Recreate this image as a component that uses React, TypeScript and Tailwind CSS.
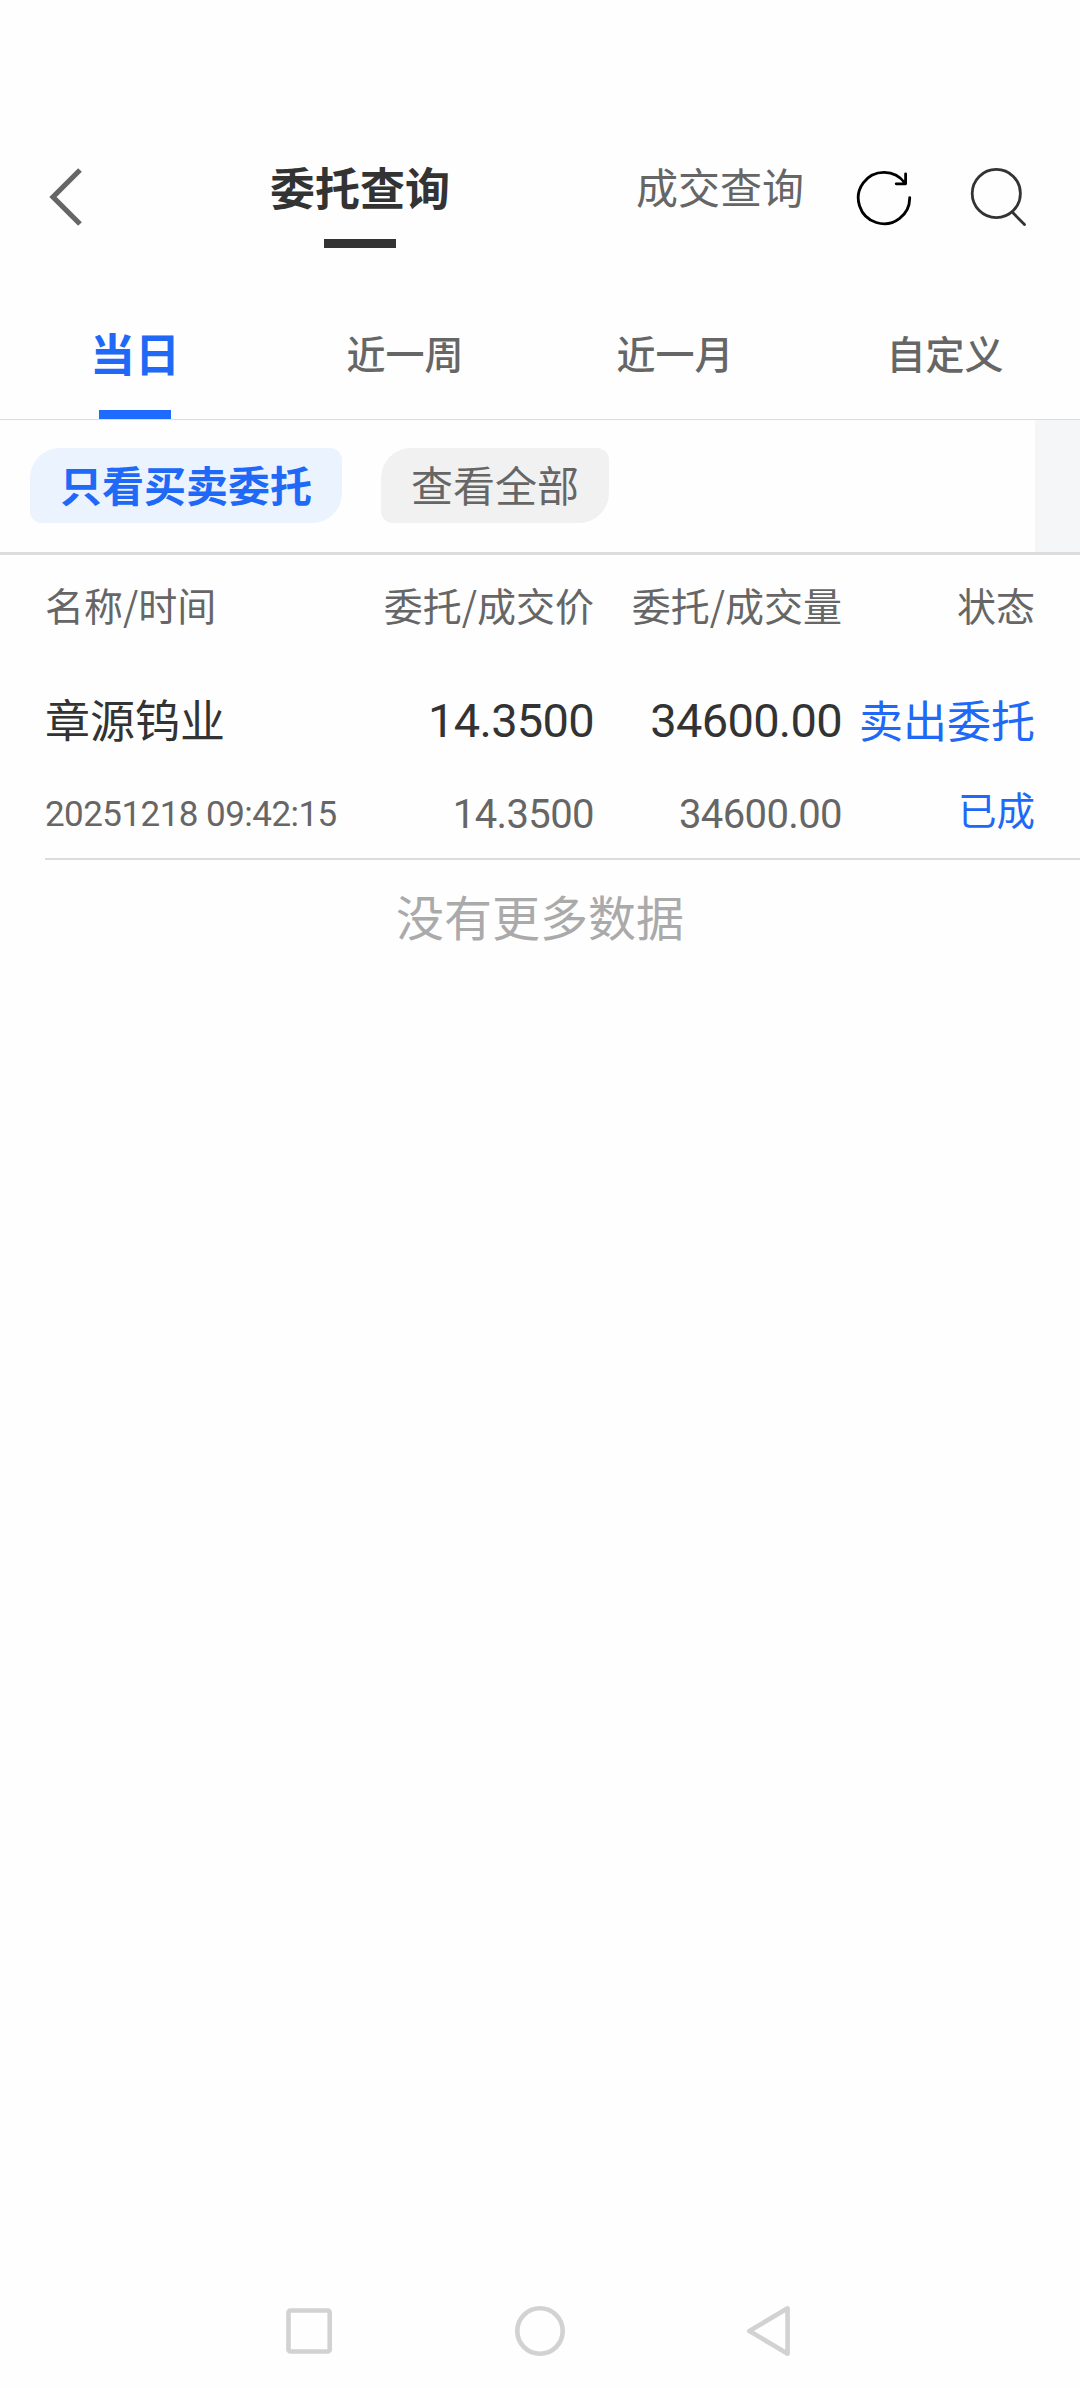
import React, { useState } from "react";
import clsx from "clsx";

type Order = {
  name: string;
  time: string;
  orderPrice: string;
  dealPrice: string;
  orderAmount: string;
  dealAmount: string;
  type: string;
  status: string;
};

const RANGES = ["当日", "近一周", "近一月", "自定义"];
const FILTERS = ["只看买卖委托", "查看全部"];

const ORDERS: Order[] = [
  {
    name: "章源钨业",
    time: "20251218 09:42:15",
    orderPrice: "14.3500",
    dealPrice: "14.3500",
    orderAmount: "34600.00",
    dealAmount: "34600.00",
    type: "卖出委托",
    status: "已成",
  },
];

const BackIcon = () => (
  <svg width="36" height="60" viewBox="0 0 36 60" fill="none">
    <path d="M33 3L6 30l27 27" stroke="#666" strokeWidth="5.2" />
  </svg>
);

const RefreshIcon = () => (
  <svg width="58" height="58" viewBox="0 0 58 58" fill="none">
    <path
      d="M54.7 28.6A25.7 25.7 0 1 1 50 14.2M50.6 4.8v10h-9.4"
      stroke="#000"
      strokeWidth="2.8"
      strokeLinecap="round"
      strokeLinejoin="round"
    />
  </svg>
);

const SearchIcon = () => (
  <svg width="60" height="60" viewBox="0 0 60 60" fill="none">
    <g stroke="#333" strokeWidth="2.8" strokeLinecap="round">
      <circle cx="27.3" cy="26.5" r="24.1" />
      <path d="M43.5 45.3l12 12.3" />
    </g>
  </svg>
);

const Header: React.FC = () => (
  <header className="flex h-[180px] mt-[105px] pt-[55px]">
    <button className="block w-[180px] h-[70px] pl-[47px] pt-1">
      <BackIcon />
    </button>
    <div className="flex flex-col items-center w-[360px]">
      <h1 className="h-[54px] leading-[54px] text-[45px] font-bold text-[#333]">
        委托查询
      </h1>
      <div className="w-[72px] h-[9px] mt-[25px] bg-[#333]" />
    </div>
    <div className="w-[360px] h-[52px] leading-[52px] text-center text-[42px] text-[#666] -mr-[45px]">
      成交查询
    </div>
    <button className="block h-[58px] mt-[9px]">
      <RefreshIcon />
    </button>
    <button className="block h-[60px] mt-[7px] ml-[56px]">
      <SearchIcon />
    </button>
  </header>
);

const OrderRow: React.FC<{ order: Order }> = ({ order }) => (
  <div className="ml-[45px] pr-[45px] h-[212px] pt-[37px] border-b-2 border-[#dcdcdc]">
    <div className="grid grid-cols-[290px_259px_248px_193px] h-[66px] leading-[68px] text-[45px] text-[#333]">
      <span>{order.name}</span>
      <span className="text-right font-[Roboto] text-[47px] tracking-[-0.7px] leading-[71px]">{order.orderPrice}</span>
      <span className="text-right font-[Roboto] text-[47px] tracking-[-0.7px] leading-[71px]">{order.orderAmount}</span>
      <span className="text-right text-[44px] text-[#2069f6]">{order.type}</span>
    </div>
    <div className="grid grid-cols-[290px_259px_248px_193px] h-[60px] mt-[28px] leading-[72px] text-[40px] text-[#666]">
      <span className="font-[Roboto] text-[35px] tracking-[-0.55px] whitespace-nowrap">{order.time}</span>
      <span className="text-right font-[Roboto] tracking-[-0.6px]">{order.dealPrice}</span>
      <span className="text-right font-[Roboto] tracking-[-0.6px]">{order.dealAmount}</span>
      <span className="text-right text-[38.5px] leading-[58px] text-[#2069f6]">{order.status}</span>
    </div>
  </div>
);

const NavBar: React.FC = () => (
  <nav className="flex items-center h-[114px] pl-[284px]">
    <svg width="508" height="54" viewBox="0 0 508 54" fill="none">
      <g stroke="#d2d2d2" strokeWidth="4.6" strokeLinejoin="round">
        <rect x="4.5" y="6.5" width="41.2" height="41" rx="2" />
        <circle cx="256" cy="27" r="22.7" />
        <path d="M503.6 4.3v45.4L465.4 27z" />
      </g>
    </svg>
  </nav>
);

const App: React.FC = () => {
  const [range, setRange] = useState(0);
  const [filter, setFilter] = useState(0);

  return (
    <div className="flex flex-col w-[1080px] h-[2388px] overflow-hidden bg-[#fefefe] font-['Noto_Sans_CJK_SC',sans-serif]">
      <Header />
      <div className="flex h-[135px] border-b border-[#dcdcdc]">
        {RANGES.map((label, i) => (
          <button
            key={label}
            className={clsx(
              "flex flex-col items-center w-1/4",
              i === range
                ? "text-[45px] font-bold text-[#2069f6]"
                : "text-[39px] font-medium text-[#666]"
            )}
            onClick={() => setRange(i)}
          >
            <span className="h-[125px] leading-[135px]">{label}</span>
            {i === range && <span className="w-[72px] h-[9px] bg-[#1e6bff]" />}
          </button>
        ))}
      </div>
      <div className="flex items-start h-[135px] pl-[30px] border-b-3 border-[#dcdcdc]">
        {FILTERS.map((label, i) => (
          <button
            key={label}
            className={clsx(
              "h-[75px] leading-[70px] mt-[28px] pb-[3px] px-[30px] mr-[39px] text-[42px] rounded-tl-[30px] rounded-tr-[12px] rounded-br-[30px] rounded-bl-[12px]",
              i === filter
                ? "bg-[#ebf3ff] font-bold text-[#2069f6]"
                : "bg-[#f1f1f1] text-[#666]"
            )}
            onClick={() => setFilter(i)}
          >
            {label}
          </button>
        ))}
        <div className="w-[45px] h-full ml-auto bg-[#f5f6f8]" />
      </div>
      <div className="grid grid-cols-[290px_259px_248px_193px] px-[45px] h-[93px] leading-[98px] text-[39px] text-[#666]">
        <span>名称/时间</span>
        <span className="text-right">委托/成交价</span>
        <span className="text-right">委托/成交量</span>
        <span className="text-right">状态</span>
      </div>
      {ORDERS.map((order) => (
        <OrderRow key={order.time} order={order} />
      ))}
      <p className="h-[110px] leading-[110px] text-center text-[48px] text-[#aaa]">
        没有更多数据
      </p>
      <div className="flex-1" />
      <NavBar />
    </div>
  );
};

export default App;
